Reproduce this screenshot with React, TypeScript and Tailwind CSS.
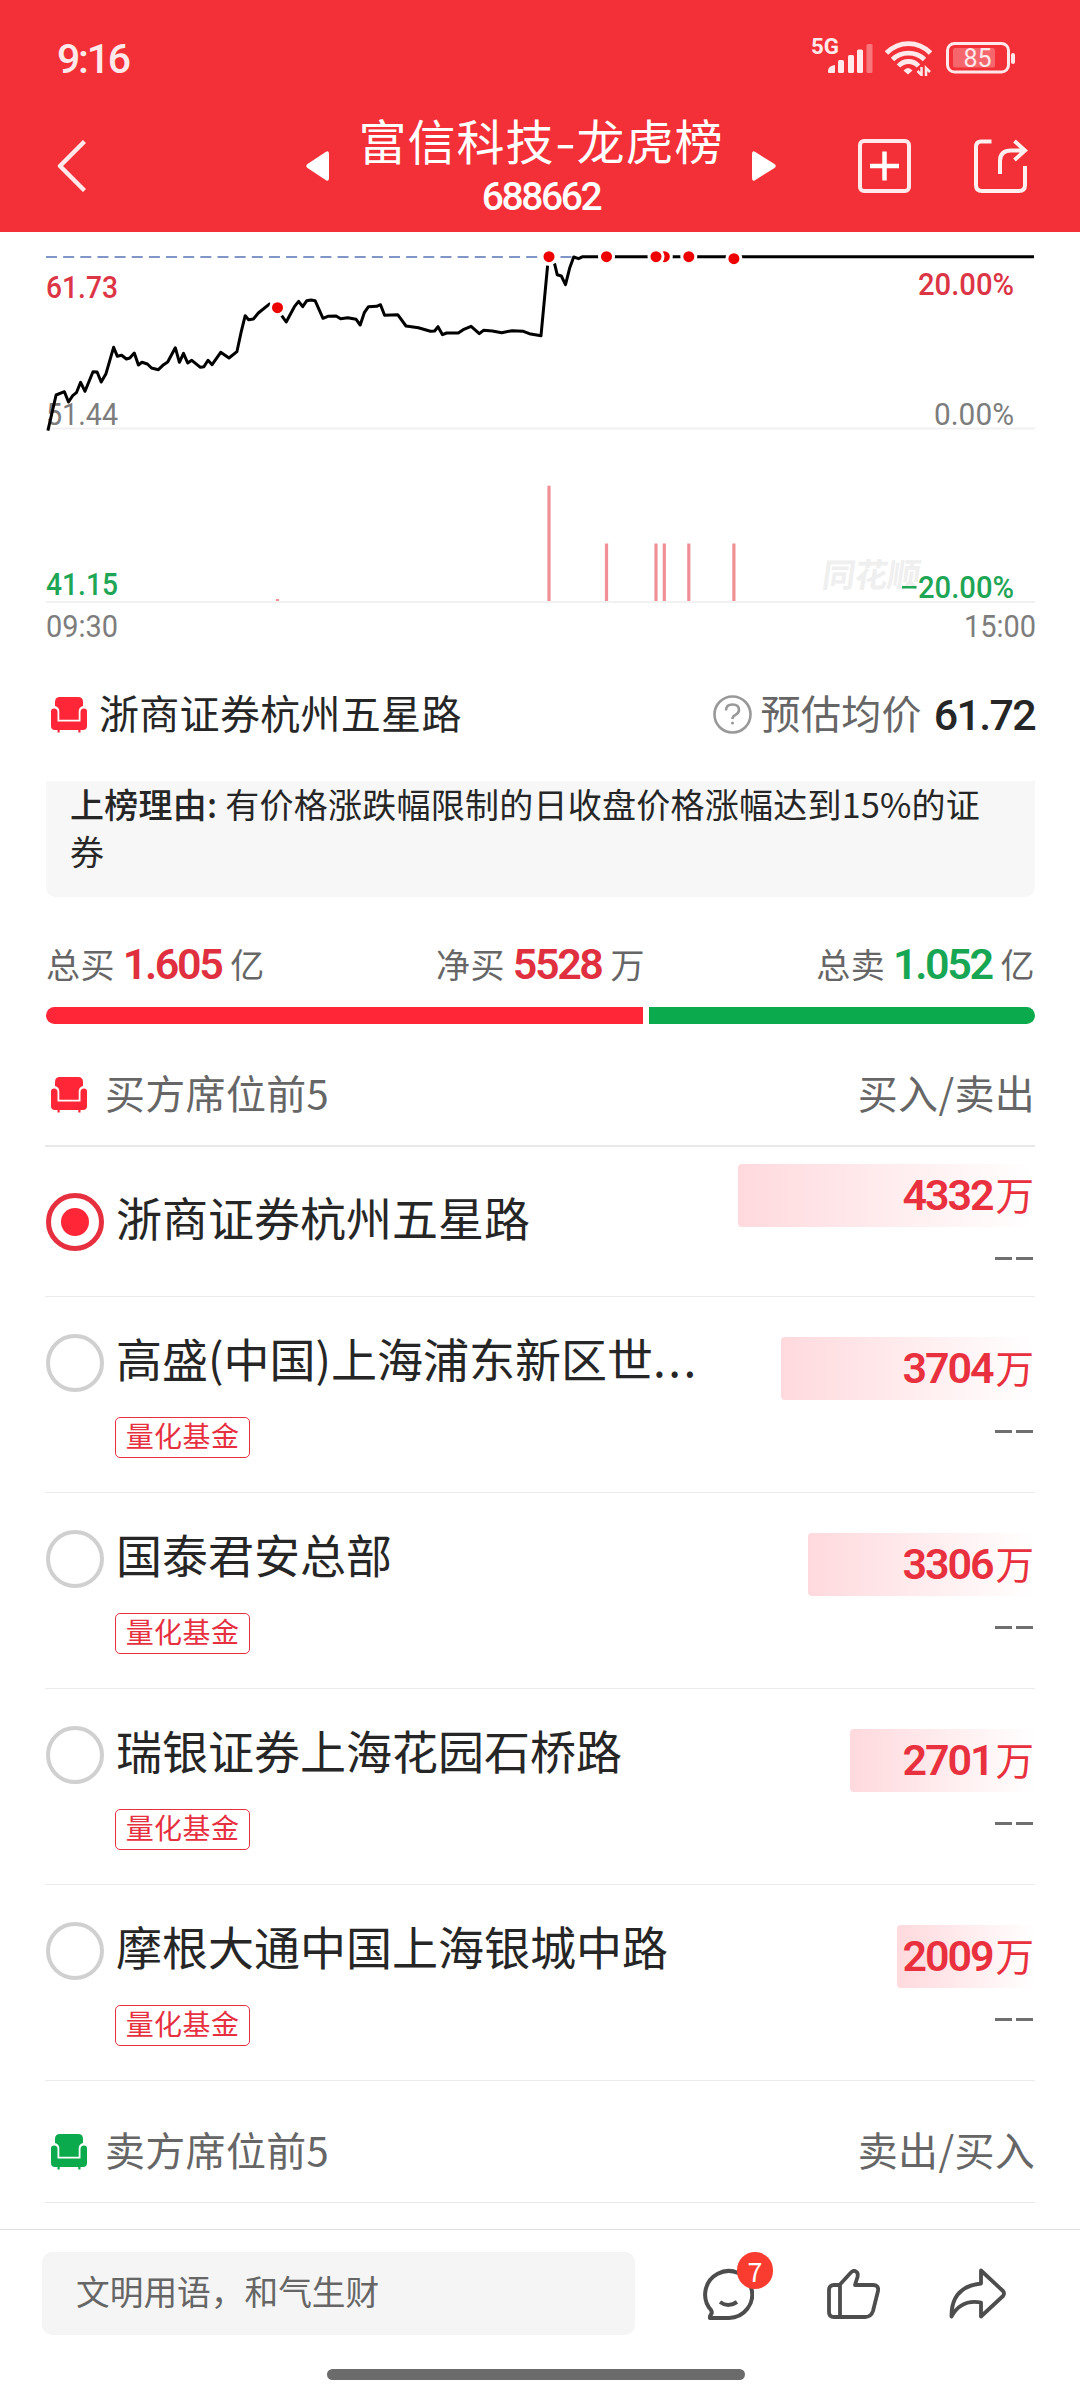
const PRICE_START =
  "47.9,198.7 56.1,163 64.4,159.7 68.5,170 72.7,163.7 76.4,160.7 80.6,150.3 85,159.3 93,139.7 97.1,140 101.2,150 106,141.7 113.6,115.3 117.4,124.3 121.6,123.3 126.4,127 129.8,126 134.3,121 138.4,133 141.9,130.3 147.4,132 151.5,136 158.4,137.7 163.6,132.7 167.7,130 175.3,115.7 179.4,130.3 183.5,121.3 187.7,131 191.8,128.3 200.4,135.3 203.9,134.7 208,128.3 212.1,132.7 220.7,120.3 229,126 236.9,119.7 241,100.7 245.2,83.7 248.6,87.7 253.4,87 258.3,81 270.3,71.3";
const PRICE_MID =
  "281.7,83.7 286.2,90 294.4,74.7 298.6,69.3 302.7,74.7 306.8,68.7 311,68 315.1,68.7 323,86.3 327.8,84.3 336.1,84 340.6,86.7 347.8,85.7 356.1,87.3 360.2,93 364.3,80.7 368.5,74.7 376.7,74.3 380.5,72.7 384.6,83.3 397.7,82.7 406,94 418.4,95.7 430.4,99.3 434.6,99 438,94.7 442.5,102.7 446.6,101 458.3,101 463.2,97.7 471.1,94.3 479.3,101.7 483.5,98.3 492.4,99 501.7,100.7 512,98.7 523.4,99.3 529.3,101.7 541,103.7 547.6,33.7";
const PRICE_END =
  "554.5,31.3 557.2,42.7 561.3,44 565.5,52.7 569.6,36.3 573.7,25 578.6,26.7 582.7,24.7 1034,24.7";

const MARKERS = [
  { x: 277.5, y: 75.7, top: 367 },
  { x: 549, y: 24.7, top: 253.7 },
  { x: 606.5, y: 24.7, top: 311.5 },
  { x: 664.3, y: 24.7, top: 311.5 },
  { x: 656, y: 24.7, top: 311.5 },
  { x: 688.8, y: 24.7, top: 311.5 },
  { x: 733.9, y: 26.7, top: 311.5 },
];

const CHART_LABELS = [
  { text: "61.73", x: 46, y: 66, w: 72, className: "fill-[#dc3545]", medium: true },
  { text: "51.44", x: 46, y: 192.5, w: 72, className: "fill-[#7d7d7d]" },
  { text: "41.15", x: 46, y: 362.5, w: 72, className: "fill-[#1ea556]", medium: true },
  { text: "09:30", x: 46, y: 405, w: 72, className: "fill-[#7d7d7d]" },
  { text: "20.00%", x: 918, y: 62.5, w: 96, className: "fill-[#dc3545]", medium: true },
  { text: "0.00%", x: 934, y: 192.5, w: 80, className: "fill-[#7d7d7d]" },
  { text: "20.00%", x: 918, y: 365.5, w: 96, className: "fill-[#1ea556]", medium: true, negative: true },
  { text: "15:00", x: 964, y: 405, w: 72, className: "fill-[#7d7d7d]" },
];

const SEATS = [
  { name: "浙商证券杭州五星路", amount: "4332", bar: 297, selected: true },
  { name: "高盛(中国)上海浦东新区世", truncated: true, amount: "3704", bar: 254, tag: "量化基金" },
  { name: "国泰君安总部", amount: "3306", bar: 227, tag: "量化基金" },
  { name: "瑞银证券上海花园石桥路", amount: "2701", bar: 185, tag: "量化基金" },
  { name: "摩根大通中国上海银城中路", amount: "2009", bar: 138, tag: "量化基金" },
];

function StatusBar() {
  return (
    <div className="flex h-[116px] items-center pl-[57px] text-[#ffe9ea]">
      <span className="w-[753px] pt-[3px] font-['Roboto',sans-serif] text-[41px] font-medium tracking-[-2.200px]">
        9:16
      </span>
      <svg width="64" height="40" viewBox="0 -4 64 40" className="-mt-[4px] overflow-visible" fill="currentColor">
        <text x="1" y="14" fontSize="22" fontWeight="700" fontFamily="Roboto, sans-serif" textLength="28" lengthAdjust="spacingAndGlyphs">
          5G
        </text>
        <path d="M18 32v-1q0-5 7-6v7q0 1-1 1h-5q-1 0-1-1Z" />
        <rect x="28" y="20" width="6" height="13" rx="1.5" />
        <rect x="38" y="15" width="6" height="18" rx="1.5" />
        <rect x="47" y="9.500" width="6" height="23.500" rx="1.500" />
        <rect x="56.500" y="4" width="6" height="29" rx="1.500" opacity=".38" />
      </svg>
      <svg className="ml-[11px]" width="47" height="36" viewBox="0 0 47 36" fill="none" stroke="currentColor" strokeWidth="4.800">
        <path d="M1.500 13C14 .5 33 .5 45.500 13" />
        <path d="M7.500 19.500C16 11 31 11 39.500 19.500" />
        <path d="M13.500 26C19 20 28 20 33.500 26" />
        <path d="m23 34.500-4.500-4q4.500-5 9 0Z" fill="currentColor" stroke="none" />
        <path d="M36.500 27v8l-4-4M41 36v-8l4 4" strokeWidth="2.500" />
      </svg>
      <svg className="ml-[14px]" width="70" height="32" viewBox="0 0 70 32" fill="none">
        <rect x="1.500" y="1.500" width="61" height="28.500" rx="7" stroke="currentColor" strokeWidth="3" />
        <rect x="7" y="6" width="42" height="19.500" rx="2" fill="currentColor" opacity=".3" />
        <rect x="65" y="11" width="4" height="11" rx="2" fill="currentColor" />
        <text x="17.500" y="24.500" fontSize="25" fontWeight="400" fontFamily="Roboto, sans-serif" fill="currentColor">
          85
        </text>
      </svg>
    </div>
  );
}

function Header() {
  return (
    <header className="h-[232px] shrink-0 bg-[#f33037] text-white">
      <StatusBar />
      <nav className="flex h-[99px] items-center pl-[57px]">
        <svg width="29" height="52" viewBox="0 0 29 52" fill="none" stroke="#ffe9ea" strokeWidth="4.400">
          <path d="M27.500 1.500 3 26 27.500 50.500" strokeLinejoin="round" />
        </svg>
        <svg className="ml-[220px]" width="23" height="30" viewBox="0 0 23 30" fill="currentColor">
          <path d="M20 .8Q23-1 23 3v24q0 4-3 2.200L1.500 17q-2.500-2 0-4Z" />
        </svg>
        <div className="ml-[29px] flex w-[366px] flex-col items-center pt-[2px]">
          <h1 className="h-[58px] text-[48px] leading-[52px] tracking-[1px] whitespace-nowrap">
            富信科技<span className="inline-block w-[22px] origin-left scale-x-125">-</span>龙虎榜
          </h1>
          <span className="h-[50px] font-['Roboto',sans-serif] text-[39px] leading-[52px] font-medium tracking-[-2.400px]">
            688662
          </span>
        </div>
        <svg className="ml-[28px]" width="24" height="30" viewBox="0 0 24 30" fill="currentColor">
          <path d="M3 .8Q0-1 0 3v24q0 4 3 2.200L22.500 17q2.500-2 0-4Z" />
        </svg>
        <svg className="ml-[82px]" width="53" height="54" viewBox="0 0 53 54" fill="none" stroke="currentColor" strokeWidth="4">
          <rect x="2" y="2" width="49" height="50" rx="4" stroke="#ffe9ea" />
          <path d="M26.500 12.500v29M12 27h29" strokeWidth="4.500" />
        </svg>
        <svg className="ml-[63px]" width="54" height="54" viewBox="0 0 54 54" fill="none" stroke="#fff0f0" strokeWidth="4">
          <path d="M17.500 2.500H7Q2 2.500 2 8v38q0 6 6 6h37q6 0 6-6V27" />
          <path d="M26 35V22q0-10.500 11-10.500h13M40.500 2l10.500 9.500L40.500 21" />
        </svg>
      </nav>
    </header>
  );
}

function Chart() {
  return (
    <svg className="shrink-0" width="1080" height="418" viewBox="0 0 1080 418" fill="none">
      <path d="M46 196.500H1035M46 370H1035" stroke="#f1f1f1" strokeWidth="2" />
      <path d="M46 25H575" stroke="#8096c6" strokeWidth="2" strokeDasharray="11 6.150" />
      <text x="0" y="0" transform="translate(821 355) skewX(-8)" fontSize="33" fontWeight="700" fontFamily="Noto Sans CJK SC, sans-serif" fill="#efefef" textLength="98">
        同花顺
      </text>
      {CHART_LABELS.map((label) => (
        <g key={`${label.x}-${label.y}`} className={label.className}>
          {label.negative && <rect x="902" y="354" width="14.500" height="2.500" />}
          <text
            x={label.x}
            y={label.y}
            fontSize="31"
            fontWeight={label.medium ? 500 : 400}
            fontFamily="Roboto, sans-serif"
            textLength={label.w}
            lengthAdjust="spacingAndGlyphs"
          >
            {label.text}
          </text>
        </g>
      ))}
      <g stroke="#000" strokeWidth="3" strokeLinejoin="round">
        <polyline points={PRICE_START} />
        <polyline points={PRICE_MID} />
        <polyline points={PRICE_END} />
      </g>
      {MARKERS.map((m) => (
        <g key={m.x}>
          <path d={`M${m.x} ${m.top}V369`} stroke="#f09096" strokeWidth="3.200" />
          <circle cx={m.x} cy={m.y} r="7" fill="#ee0000" stroke="#fff" strokeWidth="3" />
        </g>
      ))}
    </svg>
  );
}

function SeatIcon({ className }: { className: string }) {
  return (
    <svg className={className} width="36" height="36" viewBox="0 0 36 36" fill="currentColor">
      <path d="M9 0h18q5 0 5 5v4q-4.300 1-4.300 5.500v8.200H8.300v-8.200Q8.300 10 4 9V5q0-5 5-5Z" />
      <path d="M0 14.500q0-3 3-3 3.500 0 3.500 3.500v9.500h23V15q0-3.500 3.500-3.500 3 0 3 3V29q0 4-4 4H4q-4 0-4-4Z" />
      <path d="M6.500 32h2.200v3.500H6.500zM27.300 32h2.200v3.500h-2.200z" />
    </svg>
  );
}

function Broker() {
  return (
    <div className="flex h-[131px] shrink-0 items-center pr-[45px] pb-[2px] pl-[51px]">
      <SeatIcon className="text-[#ff2638]" />
      <span className="ml-[12px] pb-[5px] text-[40px] leading-[60px] tracking-[.3px]">浙商证券杭州五星路</span>
      <svg className="ml-auto" width="39" height="39" viewBox="0 0 39 39" fill="none" stroke="#999" strokeWidth="2.600">
        <circle cx="19.500" cy="19.500" r="18" />
        <path d="M13 15.500Q13 9.500 19.500 9.500T26 15q0 3-3.500 4.800-3 1.500-3 4.200" />
        <circle cx="19.500" cy="28" r="1.500" fill="#999" stroke="none" />
      </svg>
      <span className="ml-[9px] pb-[5px] text-[40px] leading-[60px] tracking-[.3px] text-[#666]">预估均价</span>
      <span className="ml-[12px] font-['Roboto',sans-serif] text-[43px] leading-[60px] font-medium tracking-[-1.700px]">
        61.72
      </span>
    </div>
  );
}

function Total({ label, value, unit, color }: { label: string; value: string; unit: string; color: string }) {
  return (
    <div className="flex items-center text-[34px] leading-[50px] tracking-[.4px] text-[#666]">
      {label}
      <span className={`mr-[9px] ml-[8px] pt-px font-['Roboto',sans-serif] text-[43px] font-semibold tracking-[-2.400px] ${color}`}>
        {value}
      </span>
      {unit}
    </div>
  );
}

function SectionTitle({ title, columns, color, className }: { title: string; columns: string; color: string; className: string }) {
  return (
    <div className={`mx-[45px] flex shrink-0 items-center pl-[6px] text-[40px] tracking-[.3px] text-[#666] ${className}`}>
      <SeatIcon className={color} />
      <span className="ml-[18px] pb-[5px]">{title}</span>
      <span className="ml-auto pb-[5px]">{columns}</span>
    </div>
  );
}

function SeatRow({ seat }: { seat: (typeof SEATS)[number] }) {
  return (
    <div
      className={`mx-[45px] flex shrink-0 items-start border-b border-[#ebebeb] pl-px ${
        seat.selected ? "h-[150px] pt-[17px]" : "h-[196px] pt-[40px]"
      }`}
    >
      <div className={seat.selected ? "mt-[29px]" : "-mt-[3px]"}>
        {seat.selected ? (
          <div className="flex size-[58px] items-center justify-center rounded-full border-[5px] border-[#e7303f]">
            <div className="size-[28px] rounded-full bg-[#ff2638]" />
          </div>
        ) : (
          <div className="size-[58px] rounded-full border-[4px] border-[#d0d0d0]" />
        )}
      </div>
      <div className={seat.selected ? "ml-[12px] pt-[24px]" : "ml-[12px] -mt-[8px]"}>
        <div className="h-[60px] text-[46px] leading-[56px] whitespace-nowrap">
          {seat.name}
          {seat.truncated && <span className="tracking-[2.400px]">...</span>}
        </div>
        {seat.tag && (
          <span className="mt-[28px] -ml-px flex h-[41px] w-[135px] items-center justify-center rounded-[5px] border border-[#e7303f] pb-[5px] text-[28px] tracking-[.4px] text-[#e7303f]">
            {seat.tag}
          </span>
        )}
      </div>
      <div className="ml-auto flex flex-col items-end">
        <div
          className="flex h-[63px] items-center justify-end rounded-[4px] bg-linear-to-r from-[#ffd9dd] to-white pr-px text-[#e8303f]"
          style={{ width: seat.bar }}
        >
          <span className="font-['Roboto',sans-serif] text-[43px] font-semibold tracking-[-2.100px]">{seat.amount}</span>
          <span className="ml-[3px] pb-[6px] text-[38.500px] leading-[60px]">万</span>
        </div>
        <div className="mt-[30px] mr-[2px] flex gap-[4px]">
          <span className="h-[3px] w-[17px] bg-[#6f6f6f]" />
          <span className="h-[3px] w-[17px] bg-[#6f6f6f]" />
        </div>
      </div>
    </div>
  );
}

function BottomBar() {
  return (
    <footer className="mt-auto h-[171px] shrink-0 border-t border-[#e0e0e0] bg-white">
      <div className="flex items-center pt-[22px] pl-[42px]">
        <div className="h-[83px] w-[593px] rounded-[10px] bg-[#f5f5f5] pl-[34px] text-[33.700px] leading-[78px] text-[#666]">
          文明用语，和气生财
        </div>
        <div className="relative ml-[68px]">
          <svg width="51" height="52" viewBox="0 0 51 52" fill="none" stroke="#4d4d4d" strokeWidth="4">
            <path d="M7 50h19a23.500 23.500 0 1 0-18-8q1.500 2.500 0 4.500Q6.500 48.500 7 50Z" strokeLinejoin="round" />
            <path d="M17 34q8 6 17 0" />
          </svg>
          <span className="absolute -top-[16px] left-[34px] flex h-[37px] w-[36px] items-center justify-center rounded-full bg-[#fa3c30] text-[27px] leading-none text-white">
            7
          </span>
        </div>
        <svg className="ml-[73px]" width="53" height="50" viewBox="0 0 53 50" fill="none" stroke="#4d4d4d" strokeWidth="3.800" strokeLinejoin="round">
          <path d="M12.500 16H7q-5 0-5 5v22q0 5 5 5h31q6 0 8-6l5-20q1-6-5-6H28l2.500-8q1-4.500-2-5.800Q26 1 23.500 4Z" />
          <path d="M13 15v33" />
        </svg>
        <svg className="ml-[69px]" width="57" height="51" viewBox="0 0 57 51" fill="none" stroke="#4d4d4d" strokeWidth="3.800" strokeLinejoin="round">
          <path d="M32 2.500 54 23q2 2.500 0 5L32 48.500V34.500Q12 31 2.500 48.500 2 19 32 15.500Z" />
        </svg>
      </div>
      <div className="mx-auto mt-[34px] h-[11px] w-[418px] -translate-x-[4px] rounded-full bg-[#6b6b6b]" />
    </footer>
  );
}

export default function App() {
  return (
    <div className="flex h-[2400px] w-[1080px] flex-col overflow-hidden bg-white font-['Noto_Sans_CJK_SC',sans-serif] text-[#262626]">
      <Header />
      <Chart />
      <Broker />
      <div className="mr-[45px] ml-[46px] h-[116px] shrink-0 rounded-b-[10px] bg-[#f7f7f7] pl-[24px] text-[34px] leading-[46.500px] tracking-[.25px]">
        <span className="font-medium">上榜理由:</span> 有价格涨跌幅限制的日收盘价格涨幅达到15%的证
        <br />券
      </div>
      <div className="mr-[45px] ml-[46px] mt-[41px] flex shrink-0 justify-between">
        <Total label="总买" value="1.605" unit="亿" color="text-[#e0303f]" />
        <Total label="净买" value="5528" unit="万" color="text-[#e0303f]" />
        <Total label="总卖" value="1.052" unit="亿" color="text-[#17a653]" />
      </div>
      <div className="mr-[45px] ml-[46px] mt-[18px] flex h-[17px] shrink-0 gap-[6px]">
        <div className="w-[597px] rounded-l-full bg-[#ff2638]" />
        <div className="flex-1 rounded-r-full bg-[#0aaa4d]" />
      </div>
      <SectionTitle title="买方席位前5" columns="买入/卖出" color="text-[#ff2638]" className="mt-[20px] h-[103px] border-b-2 border-[#e8e8e8]" />
      {SEATS.map((seat) => (
        <SeatRow key={seat.name} seat={seat} />
      ))}
      <SectionTitle title="卖方席位前5" columns="卖出/买入" color="text-[#0aaa4d]" className="mt-[20px] h-[102px] border-b border-[#e8e8e8]" />
      <BottomBar />
    </div>
  );
}
